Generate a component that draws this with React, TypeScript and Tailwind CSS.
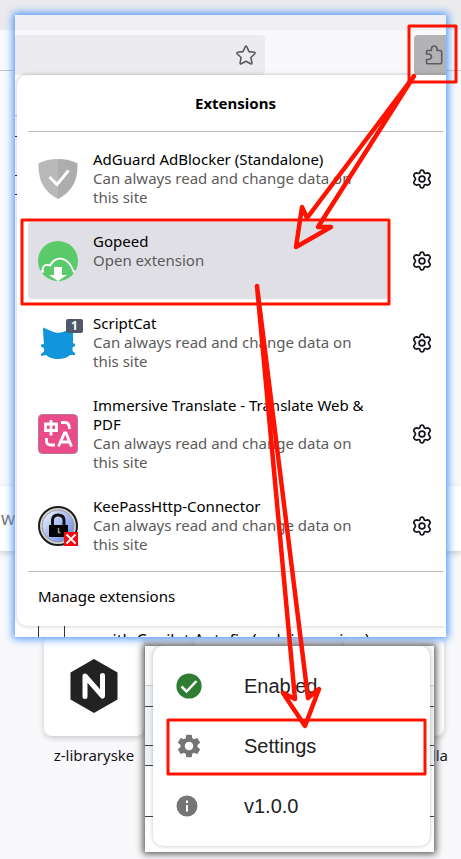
import type { ReactNode } from "react";

function GearOutline() {
  return (
    <svg viewBox="0 0 20 20" className="size-5" fill="none" stroke="#15141a" strokeWidth="1.7" strokeLinejoin="round" aria-hidden="true">
      <path d="M8.5 1.7Q10 .5 11.500 1.700L12.300 3.900Q12.700 4.400 13.300 4.500L15.600 3.900Q17.600 4 18.200 6.200Q18.400 7 17.700 7.800L16.600 9.400Q16.400 10 16.600 10.600L17.700 12.200Q18.400 13 18.200 13.800Q17.600 16 15.600 16.100L13.300 15.500Q12.700 15.600 12.300 16.100L11.500 18.300Q10 19.500 8.500 18.300L7.700 16.100Q7.300 15.600 6.700 15.500L4.400 16.100Q2.400 16 1.800 13.800Q1.600 13 2.300 12.200L3.400 10.600Q3.600 10 3.400 9.400L2.300 7.800Q1.600 7 1.800 6.200Q2.400 4 4.400 3.900L6.700 4.500Q7.300 4.400 7.700 3.900Z" />
      <circle cx="10" cy="10" r="2.900" />
    </svg>
  );
}

function ShieldIcon() {
  return (
    <svg viewBox="0 0 40 40" className="size-10" aria-hidden="true">
      <path d="M20 0C13 0 6 1.500 .5 4.300C.3 17 2.500 31 20 40Z" fill="#b9b9b9" />
      <path d="M20 0C27 0 34 1.500 39.500 4.300C39.700 17 37.500 31 20 40Z" fill="#adadad" />
      <path d="M11.500 18L19 25.500L30.500 11.500" fill="none" stroke="#fff" strokeWidth="3" />
    </svg>
  );
}

function GopeedIcon() {
  return (
    <svg viewBox="0 0 40 40" className="size-10" aria-hidden="true">
      <circle cx="20" cy="20" r="20" fill="#5bca6b" />
      <path d="M3 30.500H5C3.500 26 7 22.500 12 24.500C15 18.500 21 16 27 19C32 21.500 34 26 35.500 30.500H37.500" fill="none" stroke="#fff" strokeWidth="1.800" />
      <path d="M16 26H24V34H29L20 40L11 34H16Z" fill="#fff" />
    </svg>
  );
}

function CatIcon() {
  return (
    <span className="relative block size-10">
      <svg viewBox="0 0 40 40" className="size-10" aria-hidden="true">
        <path d="M5 4.500L15.500 9Q20 10.500 25 9L35 5V20L37 21V23L34.500 24.500V28L37 30V32L32 32Q28 36 20 36Q12 36 8 32L3 33V31L6 28.500V25L3 23.500V21.500L6 21Q5 12 5 4.500Z" fill="#1296db" />
      </svg>
      <span className="absolute -top-1 -right-[5px] flex h-3.5 w-[17px] items-center justify-center rounded-xs bg-[#4f5868] text-[12px] leading-none font-bold text-white">
        1
      </span>
    </span>
  );
}

function TranslateIcon() {
  return (
    <svg viewBox="0 0 40 40" className="size-10" aria-hidden="true">
      <rect x=".5" y=".5" width="39" height="39" rx="4" fill="#ea4c89" stroke="#b9779a" />
      <g fill="none" stroke="#fff" strokeWidth="2.800">
        <path d="M7.500 10H18.500V16.500H7.500ZM13 6V21.500" />
        <path d="M23 8.500H27Q31.500 8.500 31.500 15" />
        <path d="M8.500 24V27Q8.500 31 13 31H17" />
        <path d="M20.500 32.500L26.500 19H28L33.500 32.500M23 28H31.500" />
      </g>
    </svg>
  );
}

function KeePassIcon() {
  return (
    <svg viewBox="0 0 40 40" className="size-10" aria-hidden="true">
      <defs>
        <linearGradient id="lockDisc" x1="0" y1="0" x2="1" y2="1">
          <stop offset="0" stopColor="#f4f7ff" />
          <stop offset="1" stopColor="#5c7fe0" />
        </linearGradient>
      </defs>
      <circle cx="20" cy="20" r="19" fill="#d5d5d5" stroke="#1c1c1c" strokeWidth="2" />
      <circle cx="20" cy="20" r="16" fill="url(#lockDisc)" stroke="#999" />
      <path d="M14.500 19V14Q15 9 20 9Q25.500 9 26 14V19" fill="none" stroke="#111" strokeWidth="3" />
      <path d="M11 19H30V31H11Z" fill="#050505" />
      <path d="M20.500 22V26.500H22.500" fill="none" stroke="#9a9a9a" strokeWidth="1.500" />
      <path d="M26 26H40V40H26Z" fill="#f50a14" />
      <path d="M28.500 28.500L37.500 37.500M37.500 28.500L28.500 37.500" stroke="#fff" strokeWidth="1.800" />
    </svg>
  );
}

type Extension = { name: string; status: string; icon: ReactNode; active?: boolean };

const READS = "Can always read and change data on this site";

const extensions: Extension[] = [
  { name: "AdGuard AdBlocker (Standalone)", status: READS, icon: <ShieldIcon /> },
  { name: "Gopeed", status: "Open extension", icon: <GopeedIcon />, active: true },
  { name: "ScriptCat", status: READS, icon: <CatIcon /> },
  { name: "Immersive Translate - Translate Web & PDF", status: READS, icon: <TranslateIcon /> },
  { name: "KeePassHttp-Connector", status: READS, icon: <KeePassIcon /> },
];

function ExtensionRow({ name, status, icon, active }: Extension) {
  return (
    <li className="flex items-stretch">
      <button
        type="button"
        className={
          "flex min-h-[77px] min-w-0 flex-1 items-center gap-[15px] rounded-sm px-2.5 py-2.5 text-left " +
          (active ? "bg-[#e0dfe6]" : "")
        }
      >
        <span className="shrink-0">{icon}</span>
        <span className="flex flex-1 flex-col self-start">
          <span className="text-black">{name}</span>
          <span className="text-[#5b5b5b]">{status}</span>
        </span>
      </button>
      <button type="button" aria-label={`Manage ${name}`} className="flex w-[55px] shrink-0 items-center pl-6">
        <GearOutline />
      </button>
    </li>
  );
}

function NewTabPage() {
  return (
    <div className="absolute inset-0 flex flex-col overflow-hidden bg-[#f9f9fb]">
      <div className="h-[30px] shrink-0 bg-[#ebebed]" />
      <div className="h-[41px] shrink-0 border-b border-[#c4c4c8]" />
      <div className="mt-[415px] flex h-[65px] shrink-0 items-center bg-white px-px font-['Noto_Sans',sans-serif] text-[18px] text-[#777] shadow-[0_2px_6px_#00000033]">
        w
      </div>
      <div className="mt-[85px] ml-11 flex gap-[50px]">
        <a href="#z-library" className="w-[100px] shrink-0">
          <span className="flex h-[100px] items-center justify-center rounded-lg bg-white shadow-[0_2px_6px_#00000033]">
            <svg viewBox="0 0 48 54" className="h-[54px] w-12" aria-hidden="true">
              <path d="M24 0L47.500 13.500V40.500L24 54L.5 40.500V13.500Z" fill="#222" />
              <path d="M15 37.500V17L32.500 37V16.500" fill="none" stroke="#fff" strokeWidth="5" strokeLinecap="round" strokeLinejoin="round" />
            </svg>
          </span>
          <span className="-mx-1 block pt-2.5 text-center text-[#15141a]">z-libraryske</span>
        </a>
        <div className="h-[100px] w-[100px] shrink-0 rounded-lg bg-white shadow-[0_2px_6px_#00000033]" />
        <a href="#shortcut" className="w-[100px] shrink-0">
          <span className="block h-[100px] rounded-lg bg-white shadow-[0_2px_6px_#00000033]" />
          <span className="-mx-1 block pt-2.5 text-right text-[#15141a]">lla</span>
        </a>
      </div>
    </div>
  );
}

function ExtensionsWindow() {
  return (
    <section className="relative flex flex-col overflow-hidden bg-white">
      <div className="h-[15px] bg-[#f0eff4]" />
      <div className="flex h-[45px] items-stretch justify-between bg-[#f9f9fb] pt-[5px]">
        <div className="flex w-[250px] items-center justify-end rounded-r-sm bg-[#ececee] pr-[9px]">
          <button type="button" aria-label="Bookmark this page">
            <svg viewBox="0 0 20 20" className="size-5" fill="none" stroke="#5b5b66" strokeWidth="1.600" strokeLinejoin="round" aria-hidden="true">
              <path d="M9.300 1.600Q10 .5 10.700 1.600L13 6.600L18.300 7.300Q19.600 7.700 18.800 8.700L14.900 12.500L15.900 17.900Q15.900 19.200 14.700 18.800L10 16.200L5.300 18.800Q4.100 19.200 4.100 17.900L5.100 12.500L1.200 8.700Q.4 7.700 1.700 7.300L7 6.600Z" />
            </svg>
          </button>
        </div>
        <button type="button" aria-label="Extensions" className="flex w-8 items-center justify-end rounded-l-sm bg-[#b3b3b5] pr-[3px]">
          <svg viewBox="0 0 18 20" className="h-5 w-[18px]" fill="none" stroke="#5b5b66" strokeWidth="1.600" strokeLinejoin="round" aria-hidden="true">
            <path d="M1.500 9V6.500Q1.500 5.500 2.500 5.500H6.500V3.500Q6.800 1 9.200 1Q11.600 1 12 3.500V5.500H15.500Q16.700 5.500 16.700 6.700V17.500Q16.700 18.700 15.500 18.700H2.500Q1.500 18.700 1.500 17.700V14.500H4Q6.500 14 6.500 11.800Q6.500 9.500 4 9Z" />
          </svg>
        </button>
      </div>
      <div className="relative z-10 ml-0.5 rounded-l-[10px] bg-white pr-[3px] pl-[11px] shadow-[0_0_4px_#00000040]">
        <h1 className="flex h-[56px] items-center justify-center font-bold text-black">Extensions</h1>
        <hr className="border-[#bdbdbf]" />
        <ul className="flex flex-col gap-[5px] pt-2 pb-[7px]">
          {extensions.map((extension) => (
            <ExtensionRow key={extension.name} {...extension} />
          ))}
        </ul>
        <hr className="border-[#bdbdbf]" />
        <button type="button" className="flex h-[54px] w-full items-center px-2.5 pb-1.5 text-left text-black">
          Manage extensions
        </button>
      </div>
      <div className="ml-[23px] flex h-[11px] overflow-hidden border-l border-[#333]">
        <div className="h-full w-[26px] shrink-0 border-r border-[#333]" />
        <p className="ml-[35px] pt-[5px] text-[16px] whitespace-nowrap text-black">with Copilot Autofix (public preview)</p>
      </div>
      <div className="absolute top-[100px] left-0 w-0.5">
        <div className="h-[21px] border-t border-[#bbb]" />
        <div className="h-[39px] border-t border-[#333]" />
        <div className="h-5 border-y border-[#333]" />
      </div>
    </section>
  );
}

function MenuRow({ icon, label }: { icon: ReactNode; label: string }) {
  return (
    <li>
      <button type="button" className="flex h-[60px] w-full items-center pl-[23px] text-left">
        <span className="w-[68px] shrink-0">{icon}</span>
        <span>{label}</span>
      </button>
    </li>
  );
}

function GopeedMenu() {
  return (
    <section className="relative mt-[9px] mr-[27px] ml-[145px] overflow-hidden bg-white font-['Liberation_Sans',Arial,sans-serif] shadow-[0_0_7px_2px_#555]">
      <div className="absolute inset-0 flex flex-col overflow-hidden">
        <div className="h-10 shrink-0 border-b border-[#ccc] bg-[#f6f8fa]" />
        <div className="h-[21px] shrink-0 border-b border-[#3d444d] bg-[#eef2f5]" />
        <div className="h-[39px] shrink-0 border-b border-[#3d444d] bg-[#eef2f5]" />
        <div className="h-5 shrink-0 border-b border-[#3d444d] bg-[#eef2f5]" />
        <div className="h-[51px] shrink-0 border-b border-[#3d444d]" />
        <p className="shrink-0 pt-7 text-[15px] leading-5 font-bold text-black">s</p>
      </div>
      <ul className="relative mr-1 mb-1.5 ml-2 rounded-[10px] bg-white py-2.5 text-[20px] text-[#212121] shadow-[0_0_4px_#00000040]">
        <MenuRow
          label="Enabled"
          icon={
            <svg viewBox="0 0 26 26" className="size-[26px]" aria-hidden="true">
              <circle cx="13" cy="13" r="12.600" fill="#2e7d32" />
              <path d="M5.500 13.500L10.500 18.500L20.500 8" fill="none" stroke="#fff" strokeWidth="2.500" />
            </svg>
          }
        />
        <MenuRow
          label="Settings"
          icon={
            <svg viewBox="1 1 22 22" className="size-[26px]" fill="#757575" aria-hidden="true">
              <path d="M19.140 12.940c.04-.3.06-.61.06-.94 0-.32-.02-.64-.07-.94l2.030-1.580c.18-.14.23-.41.12-.61l-1.920-3.320c-.12-.22-.37-.29-.59-.22l-2.390.96c-.5-.38-1.030-.7-1.620-.94l-.36-2.540c-.04-.24-.24-.41-.48-.41h-3.840c-.24 0-.43.17-.47.41l-.36 2.540c-.59.24-1.130.57-1.620.94l-2.390-.96c-.22-.08-.47 0-.59.22L2.740 8.870c-.12.21-.08.47.12.61l2.030 1.580c-.05.3-.09.63-.09.94s.02.64.07.94l-2.030 1.580c-.18.14-.23.41-.12.61l1.920 3.320c.12.22.37.29.59.22l2.390-.96c.5.38 1.030.7 1.620.94l.36 2.540c.05.24.24.41.48.41h3.840c.24 0 .44-.17.47-.41l.36-2.540c.59-.24 1.130-.56 1.620-.94l2.390.96c.22.08.47 0 .59-.22l1.920-3.320c.12-.22.07-.47-.12-.61zM12 15.600c-1.980 0-3.600-1.620-3.600-3.600s1.620-3.600 3.600-3.600 3.600 1.620 3.600 3.600-1.620 3.600-3.600 3.600" />
            </svg>
          }
        />
        <MenuRow
          label="v1.0.0"
          icon={
            <svg viewBox="0 0 22 22" className="size-[22px]" aria-hidden="true">
              <circle cx="11" cy="11" r="10.500" fill="#757575" />
              <path d="M10 10H12V16.500H10ZM10 5.500H12V8H10Z" fill="#fff" />
            </svg>
          }
        />
      </ul>
    </section>
  );
}

function Annotations() {
  return (
    <svg
      width="461"
      height="859"
      className="pointer-events-none absolute top-0 left-0 z-20"
      fill="none"
      stroke="#ff1200"
      strokeLinejoin="round"
      strokeLinecap="round"
      aria-hidden="true"
    >
      <g strokeWidth="3">
        <rect x="409" y="26" width="47" height="56" />
        <rect x="22" y="220" width="367" height="84" />
        <rect x="168" y="720" width="257" height="54" />
      </g>
      <g strokeWidth="4.500">
        <path d="M414 76L307 218L302 207L296 247L331 227L318 227Z" />
        <path d="M257 286L295 699L283 693L305 726L319 689L308 698Z" />
      </g>
    </svg>
  );
}

export default function App() {
  return (
    <main className="relative min-h-screen overflow-hidden pt-[15px] pb-[7px] font-['Noto_Sans','Segoe_UI',sans-serif] text-[15px] leading-[19px]">
      <NewTabPage />
      <div className="relative">
        <div className="mx-[15px] shadow-[0_0_8px_2px_#4d94ff]">
          <ExtensionsWindow />
        </div>
        <GopeedMenu />
      </div>
      <Annotations />
    </main>
  );
}
